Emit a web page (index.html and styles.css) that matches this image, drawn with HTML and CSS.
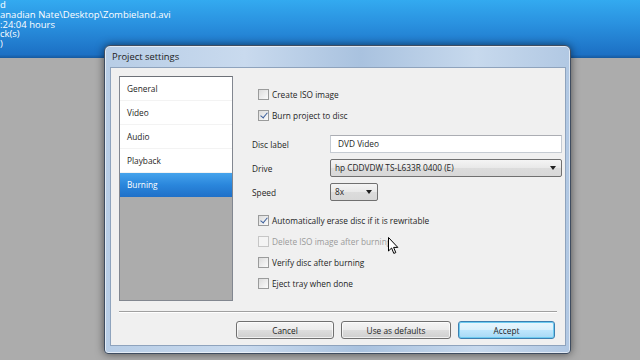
FILE: index.html
```html
<!DOCTYPE html>
<html lang="en">

<head>
    <meta charset="UTF-8">
    <meta name="viewport" content="width=device-width, initial-scale=1.0">
    <title>Project settings</title>
    <link rel="stylesheet" href="styles.css">
</head>

<body>
    <div class="desktop">
        <div class="infobar">
            <div>d</div>
            <div>anadian Nate\Desktop\Zombieland.avi</div>
            <div>:24:04 hours</div>
            <div>ck(s)</div>
            <div>)</div>
        </div>
    </div>

    <div class="dialog">
        <div class="titlebar">Project settings</div>
        <div class="client">
            <div class="main">
                <ul class="nav">
                    <li>General</li>
                    <li>Video</li>
                    <li>Audio</li>
                    <li>Playback</li>
                    <li class="active">Burning</li>
                </ul>

                <div class="panel">
                    <label class="check"><span class="box"></span>Create ISO image</label>
                    <label class="check"><span class="box checked"></span>Burn project to disc</label>

                    <div class="fields">
                        <div class="field">
                            <span class="field-label">Disc label</span>
                            <div class="input">DVD Video</div>
                        </div>
                        <div class="field">
                            <span class="field-label">Drive</span>
                            <div class="select wide">hp CDDVDW TS-L633R 0400 (E)<span class="arrow"></span></div>
                        </div>
                        <div class="field">
                            <span class="field-label">Speed</span>
                            <div class="select short">8x<span class="arrow"></span></div>
                        </div>
                    </div>

                    <div class="options">
                        <label class="check"><span class="box checked"></span>Automatically erase disc if it is rewritable</label>
                        <label class="check disabled"><span class="box"></span>Delete ISO image after burning</label>
                        <label class="check"><span class="box"></span>Verify disc after burning</label>
                        <label class="check"><span class="box"></span>Eject tray when done</label>
                    </div>
                </div>
            </div>

            <div class="separator"></div>

            <div class="buttons">
                <button class="btn cancel">Cancel</button>
                <button class="btn defaults">Use as defaults</button>
                <button class="btn accept">Accept</button>
            </div>
        </div>
    </div>

    <svg class="cursor" width="12" height="18" viewBox="0 0 12 18">
        <path d="M0.5 0.5 L0.5 14 L3.6 11 L5.8 16.4 L7.8 15.6 L5.6 10.4 L9.8 10.4 Z" fill="#ffffff" stroke="#000000" stroke-width="1" stroke-linejoin="round" />
    </svg>
</body>

</html>
```

FILE: styles.css
```css
* {
    box-sizing: border-box;
}

body {
    margin: 0;
    width: 640px;
    height: 360px;
    overflow: hidden;
    background-color: #acacac;
    font-family: "Open Sans", "Noto Sans", sans-serif;
    position: relative;
}

.desktop {
    height: 58px;
    background: linear-gradient(#33aaf0, #2a92e0 40%, #1c70c4 94%, #16599e);
}

.infobar {
    color: #ffffff;
    font-size: 9.5px;
    line-height: 9.8px;
    padding-top: 0;
}

.dialog {
    position: absolute;
    left: 104px;
    top: 45px;
    width: 467px;
    height: 309px;
    border: 1px solid #3f4d60;
    border-radius: 6px 6px 4px 4px;
    background: linear-gradient(90deg, #b7cde6, #c9daee 30%, #a9c2df 55%, #c7d9ed 80%, #b1c8e3);
    box-shadow: 0 0 9px rgba(0, 0, 0, 0.55), inset 0 0 0 1px rgba(255, 255, 255, 0.6);
    padding: 0 4px 7px 5px;
    display: flex;
    flex-direction: column;
}

.titlebar {
    height: 21px;
    line-height: 21px;
    padding-left: 2px;
    font-size: 9.4px;
    color: #1b1b1b;
}

.client {
    flex: 1;
    background-color: #f0f0f0;
    border: 1px solid #8ea3bd;
    padding: 8px 3px 0 8px;
    display: flex;
    flex-direction: column;
    font-size: 8.3px;
    color: #1e1e1e;
}

.main {
    display: flex;
    height: 225px;
}

.nav {
    list-style: none;
    margin: 0;
    padding: 0;
    width: 114px;
    flex-shrink: 0;
    height: 225px;
    background-color: #acacac;
    border: 1px solid #828790;
    border-top-color: #6d7178;
}

.nav li {
    height: 24px;
    line-height: 24px;
    padding-left: 7px;
    background-color: #ffffff;
    border-bottom: 1px solid #f3f3f3;
}

.nav li.active {
    background: linear-gradient(#45a3ec, #2a86dc 50%, #1f70c8);
    color: #ffffff;
    border-bottom: none;
}

.panel {
    margin-left: 19px;
    padding-top: 8px;
    width: 310px;
    flex-shrink: 0;
}

.check {
    display: flex;
    align-items: center;
    height: 21px;
    padding-left: 6px;
}

.check.disabled {
    color: #9a9a9a;
}

.box {
    width: 11px;
    height: 11px;
    border: 1px solid #9a9b9b;
    background: linear-gradient(135deg, #dcdcdc, #fbfbfb);
    margin-right: 3px;
    position: relative;
}

.check.disabled .box {
    border-color: #c6c6c6;
    background: #f4f4f4;
}

.box.checked::after {
    content: "";
    position: absolute;
    left: 3px;
    top: 0;
    width: 3px;
    height: 6px;
    border: solid #3b5f9c;
    border-width: 0 1.5px 1.5px 0;
    transform: rotate(40deg);
}

.fields {
    margin-top: 6px;
}

.field {
    display: flex;
    align-items: center;
    height: 24px;
}

.field-label {
    width: 78px;
}

.input {
    width: 232px;
    height: 18px;
    line-height: 16px;
    padding-left: 7px;
    background-color: #ffffff;
    border: 1px solid #c5cbd2;
    border-top-color: #abadb3;
}

.select {
    height: 18px;
    line-height: 16px;
    padding-left: 4px;
    border: 1px solid #707070;
    border-radius: 2px;
    background: linear-gradient(#f4f4f4, #e8e8e8 50%, #dcdcdc 51%, #d8d8d8);
    position: relative;
}

.select.wide {
    width: 232px;
}

.select.short {
    width: 48px;
}

.arrow {
    position: absolute;
    right: 5px;
    top: 6px;
    border-left: 3px solid transparent;
    border-right: 3px solid transparent;
    border-top: 4px solid #202020;
}

.options {
    margin-top: 6px;
}

.separator {
    margin-top: 10px;
    height: 2px;
    width: 438px;
    background-color: #a0a0a0;
    border-bottom: 1px solid #ffffff;
}

.buttons {
    display: flex;
    justify-content: flex-end;
    gap: 7px;
    margin-top: 8px;
    padding-right: 7px;
}

.btn {
    height: 18px;
    padding: 0;
    font-family: inherit;
    font-size: 8.3px;
    color: #1e1e1e;
    border: 1px solid #707070;
    border-radius: 3px;
    background: linear-gradient(#f4f4f4, #ebebeb 50%, #dddddd 51%, #cfcfcf);
    box-shadow: inset 0 0 0 1px rgba(255, 255, 255, 0.7);
}

.cancel {
    width: 98px;
}

.defaults {
    width: 110px;
}

.accept {
    width: 97px;
    border-color: #3c7fb1;
    background: linear-gradient(#eaf6fd, #d9f0fc 50%, #bee6fd 51%, #a7d9f5);
    box-shadow: inset 0 0 0 1px #6ecbf0;
}

.cursor {
    position: absolute;
    left: 388px;
    top: 237px;
}
```
